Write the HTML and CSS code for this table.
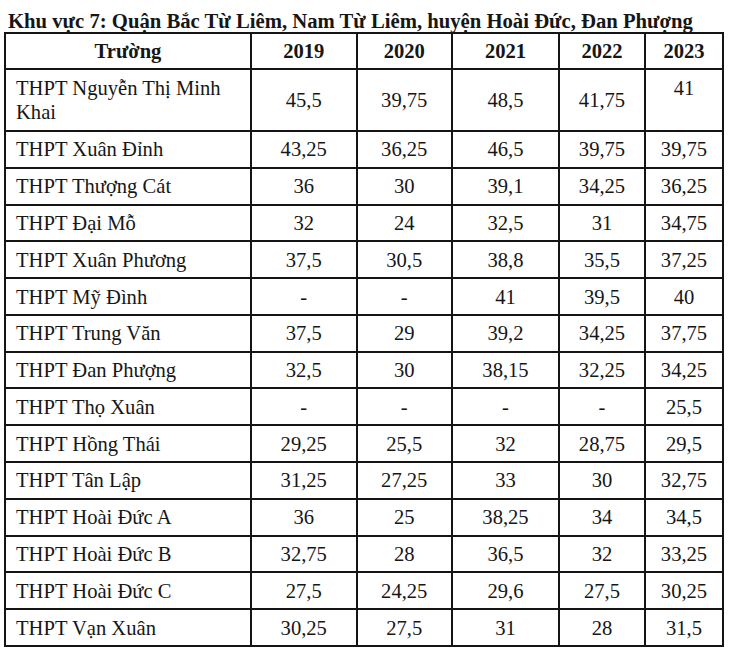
FILE: index.html
```html
<!DOCTYPE html>
<html lang="vi">
<head>
<meta charset="utf-8">
<title>Khu vực 7</title>
<link rel="stylesheet" href="styles.css">
</head>
<body>
<div class="title">Khu vực 7: Quận Bắc Từ Liêm, Nam Từ Liêm, huyện Hoài Đức, Đan Phượng</div>
<table class="scores">
  <colgroup>
    <col class="c-name"><col class="c-2019"><col class="c-2020"><col class="c-2021"><col class="c-2022"><col class="c-2023">
  </colgroup>
  <thead>
    <tr><th>Trường</th><th>2019</th><th>2020</th><th>2021</th><th>2022</th><th>2023</th></tr>
  </thead>
  <tbody>
    <tr class="tall"><td>THPT Nguyễn Thị Minh Khai</td><td>45,5</td><td>39,75</td><td>48,5</td><td>41,75</td><td class="top">41</td></tr>
    <tr><td>THPT Xuân Đỉnh</td><td>43,25</td><td>36,25</td><td>46,5</td><td>39,75</td><td>39,75</td></tr>
    <tr><td>THPT Thượng Cát</td><td>36</td><td>30</td><td>39,1</td><td>34,25</td><td>36,25</td></tr>
    <tr><td>THPT Đại Mỗ</td><td>32</td><td>24</td><td>32,5</td><td>31</td><td>34,75</td></tr>
    <tr><td>THPT Xuân Phương</td><td>37,5</td><td>30,5</td><td>38,8</td><td>35,5</td><td>37,25</td></tr>
    <tr><td>THPT Mỹ Đình</td><td>-</td><td>-</td><td>41</td><td>39,5</td><td>40</td></tr>
    <tr><td>THPT Trung Văn</td><td>37,5</td><td>29</td><td>39,2</td><td>34,25</td><td>37,75</td></tr>
    <tr><td>THPT Đan Phượng</td><td>32,5</td><td>30</td><td>38,15</td><td>32,25</td><td>34,25</td></tr>
    <tr><td>THPT Thọ Xuân</td><td>-</td><td>-</td><td>-</td><td>-</td><td>25,5</td></tr>
    <tr><td>THPT Hồng Thái</td><td>29,25</td><td>25,5</td><td>32</td><td>28,75</td><td>29,5</td></tr>
    <tr><td>THPT Tân Lập</td><td>31,25</td><td>27,25</td><td>33</td><td>30</td><td>32,75</td></tr>
    <tr><td>THPT Hoài Đức A</td><td>36</td><td>25</td><td>38,25</td><td>34</td><td>34,5</td></tr>
    <tr><td>THPT Hoài Đức B</td><td>32,75</td><td>28</td><td>36,5</td><td>32</td><td>33,25</td></tr>
    <tr><td>THPT Hoài Đức C</td><td>27,5</td><td>24,25</td><td>29,6</td><td>27,5</td><td>30,25</td></tr>
    <tr><td>THPT Vạn Xuân</td><td>30,25</td><td>27,5</td><td>31</td><td>28</td><td>31,5</td></tr>
  </tbody>
</table>
</body>
</html>
```
FILE: styles.css
```css
html, body {
  margin: 0;
  padding: 0;
  background: #ffffff;
}
body {
  font-family: "Liberation Serif", "Times New Roman", serif;
  color: #161616;
}
.title {
  padding: 11px 0 0 8px;
  height: 21px;
  line-height: 21px;
  font-size: 20.7px;
  font-weight: bold;
  white-space: nowrap;
}
.scores {
  margin-left: 4px;
  width: 720px;
  table-layout: fixed;
  border-collapse: collapse;
  font-size: 20.6px;
  line-height: 24px;
}
.c-name { width: 246px; }
.c-2019 { width: 105.5px; }
.c-2020 { width: 95.5px; }
.c-2021 { width: 107px; }
.c-2022 { width: 86px; }
.c-2023 { width: 78px; }
.scores th,
.scores td {
  border: 2px solid #141414;
  text-align: center;
  vertical-align: middle;
  padding: 5.4px 4px;
}
.scores th {
  font-weight: bold;
  padding-top: 5px;
  padding-bottom: 5px;
}
.scores td:first-child {
  text-align: left;
  padding-left: 10px;
}
.scores tr.tall td {
  padding-top: 6px;
  padding-bottom: 6px;
}
.scores td.top {
  vertical-align: top;
}
```
